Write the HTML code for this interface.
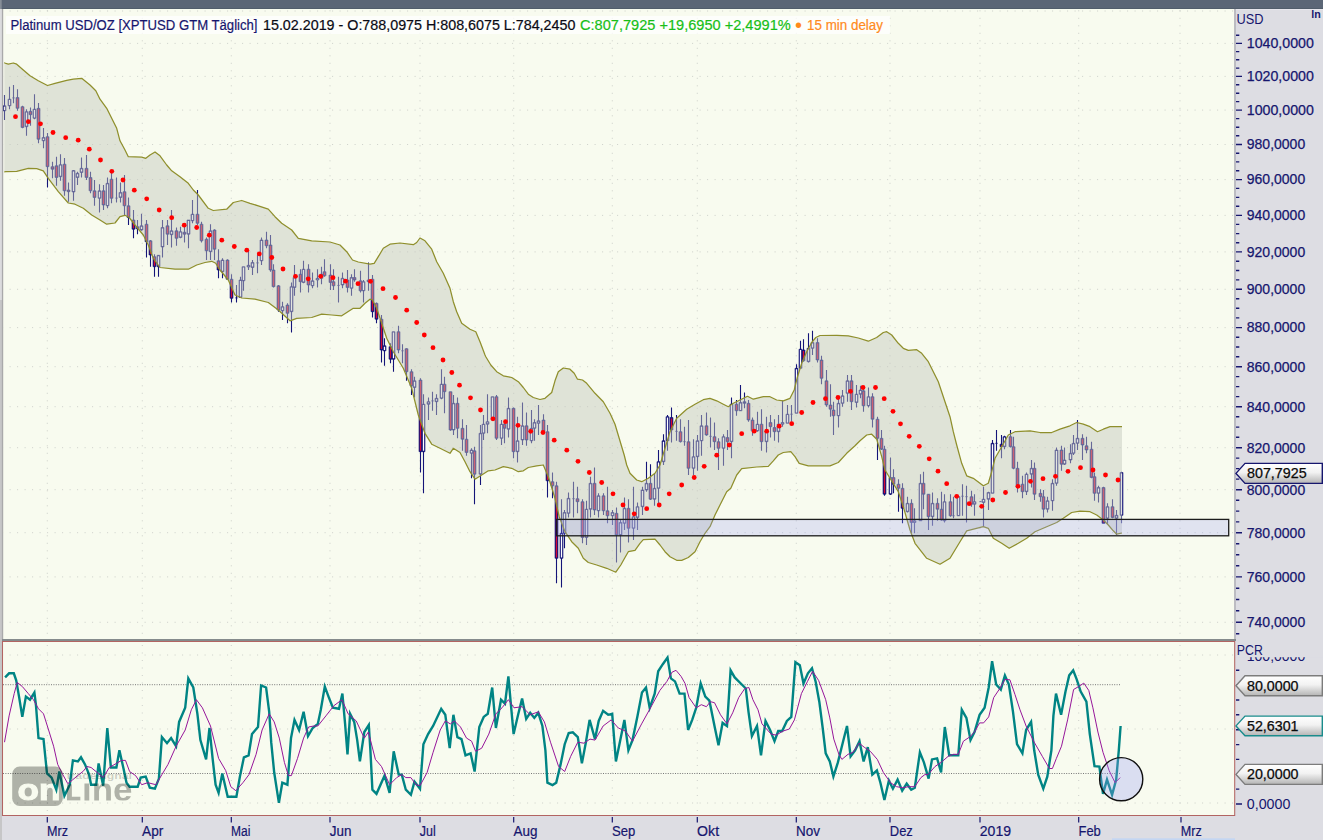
<!DOCTYPE html><html><head><meta charset="utf-8"><title>Platinum USD/OZ</title>
<style>html,body{margin:0;padding:0;background:#dddde3}svg{display:block}text{font-family:"Liberation Sans",sans-serif}</style></head><body>
<svg width="1323" height="840" viewBox="0 0 1323 840">
<defs><linearGradient id="tg" x1="0" y1="0" x2="0" y2="1"><stop offset="0" stop-color="#ffffff"/><stop offset="0.45" stop-color="#f2f2f2"/><stop offset="1" stop-color="#b4b4b4"/></linearGradient>
<clipPath id="cm"><rect x="3" y="9" width="1232" height="630"/></clipPath><clipPath id="cb"><rect x="3" y="642" width="1232" height="173"/></clipPath></defs>
<rect width="1323" height="840" fill="#dddde3"/>
<rect x="3" y="9" width="1232" height="631" fill="#f8fbef"/>
<rect x="3" y="642" width="1232" height="173.5" fill="#f8fbef"/>
<path d="M2.1 622.3 H1234 M2.1 576.9 H1234 M2.1 532.7 H1234 M2.1 489.7 H1234 M2.1 447.7 H1234 M2.1 406.7 H1234 M2.1 366.7 H1234 M2.1 327.6 H1234 M2.1 289.3 H1234 M2.1 251.9 H1234 M2.1 215.4 H1234 M2.1 179.6 H1234 M2.1 144.5 H1234 M2.1 110.1 H1234 M2.1 76.4 H1234 M2.1 43.4 H1234 M2.1 11 H1234 M47.3 10.3 V639 M142.3 10.3 V639 M231.3 10.3 V639 M330 10.3 V639 M420 10.3 V639 M513.7 10.3 V639 M612.3 10.3 V639 M697.3 10.3 V639 M796.3 10.3 V639 M890 10.3 V639 M980 10.3 V639 M1078.7 10.3 V639 M1180 10.3 V639" stroke="#bfc1bd" stroke-width="1" stroke-dasharray="1 6.5" fill="none" opacity="0.75"/>
<path d="M2.1 803 H1234 M2.1 729 H1234 M2.1 655 H1234 M47.3 645 V815 M142.3 645 V815 M231.3 645 V815 M330 645 V815 M420 645 V815 M513.7 645 V815 M612.3 645 V815 M697.3 645 V815 M796.3 645 V815 M890 645 V815 M980 645 V815 M1078.7 645 V815 M1180 645 V815" stroke="#bfc1bd" stroke-width="1" stroke-dasharray="1 6.5" fill="none" opacity="0.75"/>
<g clip-path="url(#cm)">
<path d="M4.5 95 V120 M9.5 86.7 V109.2 M13.5 85 V103.3 M17.5 89.2 V110.8 M22.5 105.8 V128.3 M26.5 109.2 V135.8 M30.5 107.5 V125.8 M34.5 94.2 V119.2 M38.5 103 V143.3 M43.5 128 V148.3 M47.5 133 V187.5 M52.5 161.7 V178.3 M56.5 156.7 V185.8 M60.5 154.2 V180.8 M64.5 158 V195.8 M68.5 182.5 V201.7 M73.5 170 V200.8 M77.5 171.7 V185 M81.5 157.5 V177.5 M86.5 155 V180 M90.5 171.7 V193.3 M94.5 180 V205.8 M99.5 184.2 V212.5 M103.5 185 V210 M107.5 177.5 V208.3 M111.5 171.7 V203.3 M116.5 177.5 V202.5 M120.5 182.5 V202.5 M124.5 175 V215 M128.5 197.5 V225 M133.5 210 V238.3 M137.5 220 V234.2 M141.5 213.7 V230.8 M146.5 220 V257.5 M150.5 240 V266.7 M154.5 254.2 V276.7 M158.5 255 V276.7 M162.5 220 V257.5 M167.5 220 V245 M171.5 210 V247.5 M176.5 227.5 V245.8 M180.5 226.7 V238.3 M184.5 226.7 V242.5 M188.5 220 V248.3 M192.5 200 V223.3 M197.5 190 V225 M201.5 221.7 V242.5 M206.5 237.5 V260 M210.5 224.2 V260 M214.5 229.2 V260 M218.5 249.2 V278.3 M222.5 258.3 V278.3 M227.5 259.2 V279.2 M231.5 274.2 V302.5 M236.5 285 V302.5 M240.5 276.7 V297.5 M243.5 266.7 V290.8 M248.5 250 V270 M252.5 260 V275 M257.5 255 V273.3 M261.5 237.5 V265 M266.5 231.7 V248.3 M270.5 235 V271.7 M273.5 264.2 V287.5 M278.5 285 V311.7 M282.5 301.7 V320 M287.5 303.3 V323.3 M291.5 282.5 V332.5 M294.5 265 V295.8 M300.5 269.2 V292.5 M303.5 260.8 V283.3 M308.5 264.2 V292.5 M312.5 272.5 V288.3 M317.5 269.2 V287.5 M321.5 266.7 V284.2 M324.5 259.2 V276.7 M330.5 264.2 V290 M333.5 269.2 V290 M338.5 276.7 V302.5 M342.5 272.5 V288.3 M347.5 270 V292.5 M351.5 274.2 V295.8 M354.5 269.2 V281.7 M360.5 270.8 V292.5 M363.5 280 V302.5 M368.5 262.5 V290.8 M372.5 275 V317.5 M376.5 302.5 V323.3 M381.5 315 V362.5 M384.5 338.3 V365.8 M390.5 343.3 V363.3 M393.5 331.7 V371.7 M398.5 325.8 V353.3 M402.5 344.2 V363.3 M406.5 348.3 V380.8 M411.5 369.2 V395 M414.5 376.7 V397.5 M420.5 378.3 V472.5 M423.5 394.2 V493.3 M428.5 397.5 V420 M432.5 391.7 V410.8 M436.5 394.2 V415 M441.5 369.2 V399.2 M444.5 376.7 V413.3 M450.5 391.7 V430.8 M453.5 395 V435 M457.5 397.5 V438.3 M462.5 419.2 V450.8 M466.5 425 V455.8 M471.5 448.3 V478.3 M474.5 446.7 V504.2 M480.5 425 V485 M483.5 415 V440 M487.5 394.2 V433.3 M492.5 396.7 V420.8 M496.5 395 V440 M501.5 420 V445 M504.5 420.8 V443.3 M508.5 397.5 V437.5 M513.5 407.5 V458.3 M517.5 416.7 V462.5 M522.5 402.5 V445 M526.5 412.5 V445.8 M531.5 410 V443.3 M534.5 419.2 V440.8 M538.5 405 V435 M543.5 414.2 V433.3 M547.5 425 V497.5 M552.5 472.5 V498.3 M556.5 481.7 V583.3 M561.5 499.2 V587.5 M564.5 510 V548.3 M568.5 492.5 V517.5 M573.5 481.7 V517.5 M577.5 486.7 V513.3 M582.5 499.2 V543.3 M586.5 500.8 V545 M590.5 476.7 V517.5 M594.5 467.5 V515 M598.5 493.3 V517.5 M603.5 493.3 V515 M607.5 486.7 V523.3 M612.5 510 V525 M616.5 507.5 V562.5 M620.5 519.2 V552.5 M624.5 497.5 V530 M628.5 499.2 V542.5 M633.5 486.7 V540 M637.5 502.5 V530 M642.5 486.7 V515 M646.5 461.7 V491.7 M650.5 464.2 V500 M654.5 473.3 V505.8 M658.5 450 V503.3 M663.5 434.2 V465 M667.5 415 V450.8 M671.5 407.5 V442.5 M676.5 415 V440.8 M680.5 419.2 V442.5 M684.5 426.7 V445.8 M688.5 420 V475 M693.5 439.2 V475 M697.5 435 V470.8 M701.5 415 V455.8 M706.5 412.5 V435.8 M710.5 417.5 V447.5 M714.5 422.5 V450 M718.5 438.3 V470 M723.5 434.2 V465.8 M727.5 430 V450 M731.5 397.5 V458.3 M736.5 400 V415.8 M740.5 385 V410.8 M744.5 392.5 V408.3 M748.5 400 V421.7 M752.5 417.5 V435.8 M757.5 411.7 V431.7 M761.5 409.2 V450.8 M766.5 416.7 V452.5 M770.5 415 V437.5 M774.5 419.2 V440.8 M778.5 415 V442.5 M782.5 400.8 V426.7 M787.5 405 V423.3 M791.5 405 V421.7 M796.5 364.2 V413.3 M800.5 340.8 V368.3 M803.5 339.2 V361.7 M808.5 333.3 V362.5 M812.5 330.8 V355 M817.5 338.3 V362.5 M821.5 355.8 V384.2 M826.5 370 V406.7 M830.5 384.2 V416.7 M833.5 401.7 V435 M838.5 397.5 V427.5 M842.5 390 V406.7 M847.5 375 V401.7 M851.5 375 V410 M856.5 385 V407.5 M860.5 385.8 V398.3 M863.5 386.7 V411.7 M868.5 387.5 V407.5 M872.5 393.3 V427.5 M877.5 416.7 V460 M881.5 430 V450 M884.5 445.8 V495.8 M890.5 457.5 V495 M893.5 469.2 V493.3 M898.5 479.2 V511.7 M902.5 483.3 V523.3 M907.5 496.7 V512.5 M911.5 499.2 V533.3 M914.5 508.3 V533.3 M920.5 474.2 V520.8 M923.5 471.7 V509.2 M928.5 494.2 V530 M932.5 492.5 V525.8 M937.5 498.3 V520.8 M941.5 491.7 V520.8 M944.5 494.2 V522.5 M950.5 494.2 V516.7 M953.5 496.7 V518.3 M958.5 495.8 V515.8 M962.5 484.2 V515.8 M966.5 485.8 V522.5 M971.5 490.8 V506.7 M974.5 494.2 V515.8 M980.5 501.3 V502 M983.5 486.7 V526.7 M988.5 491.7 V510 M992.5 440 V493.3 M996.5 430 V450.8 M1001.5 435 V458.3 M1004.5 435.8 V449.2 M1010.5 430 V447.5 M1013.5 436.7 V469.2 M1017.5 461.7 V492.5 M1022.5 475.8 V498.3 M1026.5 472.5 V495 M1031.5 460 V487.5 M1034.5 462.5 V500 M1040.5 489.2 V501.7 M1043.5 490 V517.5 M1047.5 496.7 V512.5 M1052.5 479.2 V510.8 M1056.5 447.5 V485.8 M1061.5 445.8 V470.8 M1064.5 447.5 V465 M1070.5 444.2 V463.3 M1073.5 435 V455 M1077.5 420 V450 M1082.5 434.2 V460 M1086.5 436.7 V453.3 M1091.5 441.7 V478.3 M1094.5 472.5 V500.8 M1098.5 485.8 V502.5 M1103.5 486.7 V523.3 M1107.5 503.3 V524.2 M1112.5 499.2 V518.3 M1116.5 510 V535 M1121.5 471.7 V523.3" stroke="#141478" stroke-width="1.1" fill="none"/>
<path d="M3 105.8 h3 V110.8 h-3 Z M8 99.2 h3 V105.8 h-3 Z M12 97.9 h3 M16 97.5 h3 V108.3 h-3 Z M21 106.7 h3 V127.5 h-3 Z M25 111.7 h3 V126.7 h-3 Z M29 111.3 h3 V114.7 h-3 Z M33 109.2 h3 V118.3 h-3 Z M37 108.3 h3 V139.2 h-3 Z M42 137.5 h3 V140.8 h-3 Z M46 136.7 h3 V166.7 h-3 Z M51 166.7 h3 V169.2 h-3 Z M55 165.8 h3 V177.5 h-3 Z M59 164.7 h3 V176.7 h-3 Z M63 164.2 h3 V190.8 h-3 Z M67 190 h3 V191.7 h-3 Z M72 170.5 h3 V192 h-3 Z M76 173.3 h3 V177.5 h-3 Z M80 168.3 h3 V172.5 h-3 Z M85 168.3 h3 V177.5 h-3 Z M89 177.5 h3 V190.8 h-3 Z M93 190.8 h3 V197.5 h-3 Z M98 190.8 h3 V198.3 h-3 Z M102 190.8 h3 V205 h-3 Z M106 183.3 h3 V205.8 h-3 Z M110 179.2 h3 V198.3 h-3 Z M115 198.1 h3 M119 192.5 h3 V197.5 h-3 Z M123 191.7 h3 V205.8 h-3 Z M127 205.8 h3 V217.5 h-3 Z M132 220 h3 V229.2 h-3 Z M136 226.7 h3 V228.7 h-3 Z M140 225.8 h3 V230 h-3 Z M145 224.2 h3 V241.7 h-3 Z M149 240.8 h3 V255 h-3 Z M153 256.7 h3 V266.7 h-3 Z M157 255.3 h3 V266.7 h-3 Z M161 227.5 h3 V247 h-3 Z M166 225.8 h3 V234.2 h-3 Z M170 230.8 h3 V234.7 h-3 Z M175 230.8 h3 V238.3 h-3 Z M179 231.7 h3 V237.5 h-3 Z M183 232.2 h3 V234.2 h-3 Z M187 220 h3 V234.2 h-3 Z M191 214.2 h3 V220.8 h-3 Z M196 214.2 h3 V223.3 h-3 Z M200 224.2 h3 V240.8 h-3 Z M205 239.2 h3 V250.8 h-3 Z M209 230.8 h3 V251.7 h-3 Z M213 230 h3 V249.2 h-3 Z M217 260.8 h3 V270 h-3 Z M221 260 h3 V271.7 h-3 Z M226 260 h3 V279.2 h-3 Z M230 279.2 h3 V298.3 h-3 Z M235 297.9 h3 M239 280 h3 V297.5 h-3 Z M242 266.7 h3 V280.8 h-3 Z M247 265.3 h3 V267 h-3 Z M251 262.5 h3 V267.5 h-3 Z M256 262.9 h3 M260 240 h3 V260.8 h-3 Z M265 240 h3 V245.8 h-3 Z M269 245 h3 V270 h-3 Z M272 270 h3 V286.7 h-3 Z M277 285.8 h3 V310 h-3 Z M281 306.7 h3 V310.8 h-3 Z M286 305 h3 V313.3 h-3 Z M290 286.7 h3 V311.7 h-3 Z M293 277.5 h3 V287.5 h-3 Z M299 274.2 h3 V281.7 h-3 Z M302 269.2 h3 V282.5 h-3 Z M307 269.2 h3 V285 h-3 Z M311 280.8 h3 V285.8 h-3 Z M316 278.3 h3 V280 h-3 Z M320 274.2 h3 V278.3 h-3 Z M323 271.7 h3 V275.8 h-3 Z M329 275 h3 V282.5 h-3 Z M332 281.7 h3 V285.8 h-3 Z M337 285.4 h3 M341 278.3 h3 V285 h-3 Z M346 280 h3 V287.5 h-3 Z M350 277.5 h3 V288.3 h-3 Z M353 277.5 h3 V280 h-3 Z M359 280.8 h3 V290.8 h-3 Z M362 281.7 h3 V290.8 h-3 Z M367 280 h3 V281.7 h-3 Z M371 279.2 h3 V311.7 h-3 Z M375 303.3 h3 V319.2 h-3 Z M380 319.2 h3 V350 h-3 Z M383 345.8 h3 V350.8 h-3 Z M389 346.7 h3 V359.2 h-3 Z M392 331.7 h3 V359.2 h-3 Z M397 331.7 h3 V350 h-3 Z M401 350.8 h3 M405 348.7 h3 V371.7 h-3 Z M410 371.7 h3 V385.8 h-3 Z M413 380.8 h3 V387.5 h-3 Z M419 380 h3 V451.7 h-3 Z M422 404.2 h3 V451.7 h-3 Z M427 401.7 h3 V404.2 h-3 Z M431 400.9 h3 M435 398.3 h3 V401.7 h-3 Z M440 384.2 h3 V398.3 h-3 Z M443 384.2 h3 V391.7 h-3 Z M449 391.7 h3 V430 h-3 Z M452 403.3 h3 V430 h-3 Z M456 403.3 h3 V428.3 h-3 Z M461 428.3 h3 V439.2 h-3 Z M465 439.2 h3 V452.5 h-3 Z M470 450 h3 V453.3 h-3 Z M473 450.8 h3 V474.2 h-3 Z M479 433.3 h3 V474.2 h-3 Z M482 424.2 h3 V433.3 h-3 Z M486 421.7 h3 V424.2 h-3 Z M491 396.7 h3 V420 h-3 Z M495 396.7 h3 V438.3 h-3 Z M500 424.2 h3 V438.3 h-3 Z M503 424.2 h3 V428.3 h-3 Z M507 408.3 h3 V429.2 h-3 Z M512 408.3 h3 V451.7 h-3 Z M516 440.8 h3 V451.7 h-3 Z M521 425.8 h3 V440 h-3 Z M525 425.8 h3 V440 h-3 Z M530 428.3 h3 V440.8 h-3 Z M533 422.5 h3 V428.3 h-3 Z M537 420.8 h3 V423.3 h-3 Z M542 420 h3 V431.7 h-3 Z M546 431.7 h3 V480.8 h-3 Z M551 481.7 h3 V485.8 h-3 Z M555 485.8 h3 V558.3 h-3 Z M560 533.3 h3 V558.3 h-3 Z M563 512.5 h3 V533.3 h-3 Z M567 498.3 h3 V513.3 h-3 Z M572 498.7 h3 M576 498.7 h3 V501.7 h-3 Z M581 501.7 h3 V537.5 h-3 Z M585 509.2 h3 V537.5 h-3 Z M589 483.3 h3 V509.2 h-3 Z M593 483.3 h3 V510 h-3 Z M597 495.8 h3 V510.8 h-3 Z M602 495.8 h3 V510.8 h-3 Z M606 510.8 h3 V515.8 h-3 Z M611 512.5 h3 V515.8 h-3 Z M615 513.3 h3 V535 h-3 Z M619 522.5 h3 V535 h-3 Z M623 508.3 h3 V523.3 h-3 Z M627 508.3 h3 V528.3 h-3 Z M632 516.7 h3 V528.3 h-3 Z M636 506.7 h3 V517.5 h-3 Z M641 490 h3 V506.7 h-3 Z M645 483.3 h3 V490 h-3 Z M649 483.3 h3 V499.2 h-3 Z M653 488.3 h3 V499.2 h-3 Z M657 461.7 h3 V488.3 h-3 Z M662 440.8 h3 V461.7 h-3 Z M666 416.7 h3 V440.8 h-3 Z M670 417.5 h3 V430 h-3 Z M675 431.3 h3 M679 431.7 h3 V441.7 h-3 Z M683 441.7 h3 M687 441.7 h3 V468.3 h-3 Z M692 456.7 h3 V468.3 h-3 Z M696 440.8 h3 V456.7 h-3 Z M700 425.8 h3 V440.8 h-3 Z M705 425.8 h3 V435 h-3 Z M709 436.3 h3 M713 436.7 h3 V441.7 h-3 Z M717 441.7 h3 V448.3 h-3 Z M722 436.7 h3 V448.3 h-3 Z M726 437.5 h3 V441.7 h-3 Z M730 404.2 h3 V441.7 h-3 Z M735 404.2 h3 V410.8 h-3 Z M739 402.5 h3 V410.8 h-3 Z M743 401.7 h3 V403.3 h-3 Z M747 403.3 h3 V420 h-3 Z M751 420 h3 V430.8 h-3 Z M756 424.2 h3 V430.8 h-3 Z M760 424.2 h3 V441.7 h-3 Z M765 430.8 h3 V441.7 h-3 Z M769 422.5 h3 V426.7 h-3 Z M773 427.5 h3 V431.7 h-3 Z M777 424.2 h3 V431.7 h-3 Z M781 422.5 h3 V424.2 h-3 Z M786 414.2 h3 V423.3 h-3 Z M790 414.2 h3 M795 368.3 h3 V413.3 h-3 Z M799 349.2 h3 V368.3 h-3 Z M802 350 h3 V360.8 h-3 Z M807 348.3 h3 V361.7 h-3 Z M811 342.5 h3 V348.3 h-3 Z M816 342.5 h3 V360 h-3 Z M820 360 h3 V378.3 h-3 Z M825 380.8 h3 V405 h-3 Z M829 405 h3 V409.2 h-3 Z M832 410 h3 V415.8 h-3 Z M837 403.3 h3 V415.8 h-3 Z M841 395.8 h3 V403.3 h-3 Z M846 380.8 h3 V393.3 h-3 Z M850 380.8 h3 V401.7 h-3 Z M855 394.2 h3 V402.5 h-3 Z M859 390 h3 V394.2 h-3 Z M862 390.8 h3 V405.8 h-3 Z M867 396.7 h3 V405.8 h-3 Z M871 396.7 h3 V419.2 h-3 Z M876 419.2 h3 V438.3 h-3 Z M880 438.3 h3 V449.2 h-3 Z M883 449.2 h3 V494.2 h-3 Z M889 477.5 h3 V494.2 h-3 Z M892 477.5 h3 V484.2 h-3 Z M897 484.2 h3 V488.3 h-3 Z M901 488.3 h3 V508.3 h-3 Z M906 503.3 h3 V511.7 h-3 Z M910 503.3 h3 V522.5 h-3 Z M913 520.8 h3 V522.5 h-3 Z M919 483.3 h3 V520.8 h-3 Z M922 483.3 h3 V494.2 h-3 Z M927 494.2 h3 V516.7 h-3 Z M931 503.3 h3 V516.7 h-3 Z M936 503.3 h3 V509.2 h-3 Z M940 509.2 h3 V520 h-3 Z M943 501.7 h3 V520.8 h-3 Z M949 501.7 h3 V515.8 h-3 Z M952 515.8 h3 M957 496.7 h3 V515.8 h-3 Z M961 496.2 h3 M965 496.7 h3 M970 496.7 h3 V504.2 h-3 Z M973 501.7 h3 V504.2 h-3 Z M979 501.7 h3 M982 499.2 h3 V502.5 h-3 Z M987 492.5 h3 V499.2 h-3 Z M991 443.3 h3 V493.3 h-3 Z M995 443.3 h3 M1000 444.2 h3 V446.7 h-3 Z M1003 436.7 h3 V446.7 h-3 Z M1009 436.7 h3 V446.7 h-3 Z M1012 446.7 h3 V468.3 h-3 Z M1016 468.3 h3 V487.5 h-3 Z M1021 484.2 h3 V491.7 h-3 Z M1025 474.2 h3 V491.7 h-3 Z M1030 468.3 h3 V474.2 h-3 Z M1033 468.3 h3 V494.2 h-3 Z M1039 493.3 h3 V496.7 h-3 Z M1042 496.7 h3 V509.2 h-3 Z M1046 500.8 h3 V509.2 h-3 Z M1051 483.3 h3 V500.8 h-3 Z M1055 450 h3 V483.3 h-3 Z M1060 450 h3 V464.2 h-3 Z M1063 460 h3 V464.2 h-3 Z M1069 453.3 h3 V460 h-3 Z M1072 443.3 h3 V453.3 h-3 Z M1076 438.3 h3 V443.3 h-3 Z M1081 438.3 h3 V445 h-3 Z M1085 445.8 h3 V450 h-3 Z M1090 449.2 h3 V477.5 h-3 Z M1093 476.7 h3 V493.3 h-3 Z M1097 487.5 h3 V493.3 h-3 Z M1102 487.5 h3 V523.3 h-3 Z M1106 506.7 h3 V518.3 h-3 Z M1111 506.7 h3 V517.5 h-3 Z M1115 515.3 h3 V518.3 h-3 Z M1120 472.5 h3 V515.3 h-3 Z" fill="#141478" stroke="#141478" stroke-width="0.6"/>
<path d="M17.5 98.4 V107.4 M22.5 107.6 V126.6 M30.5 112.2 V113.8 M38.5 109.2 V138.3 M47.5 137.6 V165.8 M52.5 167.6 V168.3 M56.5 166.7 V176.6 M64.5 165.1 V189.9 M68.5 190.9 V190.8 M86.5 169.2 V176.6 M90.5 178.4 V189.9 M94.5 191.7 V196.6 M103.5 191.7 V204.1 M111.5 180.1 V197.4 M124.5 192.6 V204.9 M128.5 206.7 V216.6 M133.5 220.9 V228.3 M137.5 227.6 V227.8 M146.5 225.1 V240.8 M150.5 241.7 V254.1 M154.5 257.6 V265.8 M167.5 226.7 V233.3 M176.5 231.7 V237.4 M184.5 233.1 V233.3 M197.5 215.1 V222.4 M201.5 225.1 V239.9 M206.5 240.1 V249.9 M214.5 230.9 V248.3 M218.5 261.7 V269.1 M227.5 260.9 V278.3 M231.5 280.1 V297.4 M266.5 240.9 V244.9 M270.5 245.9 V269.1 M273.5 270.9 V285.8 M278.5 286.7 V309.1 M287.5 305.9 V312.4 M300.5 275.1 V280.8 M308.5 270.1 V284.1 M324.5 272.6 V274.9 M330.5 275.9 V281.6 M333.5 282.6 V284.9 M347.5 280.9 V286.6 M354.5 278.4 V279.1 M360.5 281.7 V289.9 M372.5 280.1 V310.8 M376.5 304.2 V318.3 M381.5 320.1 V349.1 M390.5 347.6 V358.3 M398.5 332.6 V349.1 M406.5 349.6 V370.8 M411.5 372.6 V384.9 M420.5 380.9 V450.8 M444.5 385.1 V390.8 M450.5 392.6 V429.1 M457.5 404.2 V427.4 M462.5 429.2 V438.3 M466.5 440.1 V451.6 M474.5 451.7 V473.3 M496.5 397.6 V437.4 M504.5 425.1 V427.4 M513.5 409.2 V450.8 M526.5 426.7 V439.1 M543.5 420.9 V430.8 M547.5 432.6 V479.9 M552.5 482.6 V484.9 M556.5 486.7 V557.4 M577.5 499.6 V500.8 M582.5 502.6 V536.6 M594.5 484.2 V509.1 M603.5 496.7 V509.9 M607.5 511.7 V514.9 M616.5 514.2 V534.1 M628.5 509.2 V527.4 M650.5 484.2 V498.3 M671.5 418.4 V429.1 M680.5 432.6 V440.8 M688.5 442.6 V467.4 M706.5 426.7 V434.1 M714.5 437.6 V440.8 M718.5 442.6 V447.4 M727.5 438.4 V440.8 M736.5 405.1 V409.9 M748.5 404.2 V419.1 M752.5 420.9 V429.9 M761.5 425.1 V440.8 M770.5 423.4 V425.8 M774.5 428.4 V430.8 M803.5 350.9 V359.9 M817.5 343.4 V359.1 M821.5 360.9 V377.4 M826.5 381.7 V404.1 M830.5 405.9 V408.3 M833.5 410.9 V414.9 M851.5 381.7 V400.8 M863.5 391.7 V404.9 M872.5 397.6 V418.3 M877.5 420.1 V437.4 M881.5 439.2 V448.3 M884.5 450.1 V493.3 M893.5 478.4 V483.3 M898.5 485.1 V487.4 M902.5 489.2 V507.4 M911.5 504.2 V521.6 M923.5 484.2 V493.3 M928.5 495.1 V515.8 M937.5 504.2 V508.3 M941.5 510.1 V519.1 M950.5 502.6 V514.9 M971.5 497.6 V503.3 M1001.5 445.1 V445.8 M1010.5 437.6 V445.8 M1013.5 447.6 V467.4 M1017.5 469.2 V486.6 M1022.5 485.1 V490.8 M1034.5 469.2 V493.3 M1040.5 494.2 V495.8 M1043.5 497.6 V508.3 M1061.5 450.9 V463.3 M1082.5 439.2 V444.1 M1086.5 446.7 V449.1 M1091.5 450.1 V476.6 M1094.5 477.6 V492.4 M1103.5 488.4 V522.4 M1112.5 507.6 V516.6" stroke="#d40a34" stroke-width="1.3" fill="none"/>
<path d="M4.5 106.7 V109.9 M9.5 100.1 V104.9 M26.5 112.6 V125.8 M34.5 110.1 V117.4 M43.5 138.4 V139.9 M60.5 165.6 V175.8 M73.5 171.4 V191.1 M77.5 174.2 V176.6 M81.5 169.2 V171.6 M99.5 191.7 V197.4 M107.5 184.2 V204.9 M120.5 193.4 V196.6 M141.5 226.7 V229.1 M158.5 256.2 V265.8 M162.5 228.4 V246.1 M171.5 231.7 V233.8 M180.5 232.6 V236.6 M188.5 220.9 V233.3 M192.5 215.1 V219.9 M210.5 231.7 V250.8 M222.5 260.9 V270.8 M240.5 280.9 V296.6 M243.5 267.6 V279.9 M248.5 266.2 V266.1 M252.5 263.4 V266.6 M261.5 240.9 V259.9 M282.5 307.6 V309.9 M291.5 287.6 V310.8 M294.5 278.4 V286.6 M303.5 270.1 V281.6 M312.5 281.7 V284.9 M317.5 279.2 V279.1 M321.5 275.1 V277.4 M342.5 279.2 V284.1 M351.5 278.4 V287.4 M363.5 282.6 V289.9 M368.5 280.9 V280.8 M384.5 346.7 V349.9 M393.5 332.6 V358.3 M414.5 381.7 V386.6 M423.5 405.1 V450.8 M428.5 402.6 V403.3 M436.5 399.2 V400.8 M441.5 385.1 V397.4 M453.5 404.2 V429.1 M471.5 450.9 V452.4 M480.5 434.2 V473.3 M483.5 425.1 V432.4 M487.5 422.6 V423.3 M492.5 397.6 V419.1 M501.5 425.1 V437.4 M508.5 409.2 V428.3 M517.5 441.7 V450.8 M522.5 426.7 V439.1 M531.5 429.2 V439.9 M534.5 423.4 V427.4 M538.5 421.7 V422.4 M561.5 534.2 V557.4 M564.5 513.4 V532.4 M568.5 499.2 V512.4 M586.5 510.1 V536.6 M590.5 484.2 V508.3 M598.5 496.7 V509.9 M612.5 513.4 V514.9 M620.5 523.4 V534.1 M624.5 509.2 V522.4 M633.5 517.6 V527.4 M637.5 507.6 V516.6 M642.5 490.9 V505.8 M646.5 484.2 V489.1 M654.5 489.2 V498.3 M658.5 462.6 V487.4 M663.5 441.7 V460.8 M667.5 417.6 V439.9 M693.5 457.6 V467.4 M697.5 441.7 V455.8 M701.5 426.7 V439.9 M723.5 437.6 V447.4 M731.5 405.1 V440.8 M740.5 403.4 V409.9 M744.5 402.6 V402.4 M757.5 425.1 V429.9 M766.5 431.7 V440.8 M778.5 425.1 V430.8 M782.5 423.4 V423.3 M787.5 415.1 V422.4 M796.5 369.2 V412.4 M800.5 350.1 V367.4 M808.5 349.2 V360.8 M812.5 343.4 V347.4 M838.5 404.2 V414.9 M842.5 396.7 V402.4 M847.5 381.7 V392.4 M856.5 395.1 V401.6 M860.5 390.9 V393.3 M868.5 397.6 V404.9 M890.5 478.4 V493.3 M907.5 504.2 V510.8 M914.5 521.7 V521.6 M920.5 484.2 V519.9 M932.5 504.2 V515.8 M944.5 502.6 V519.9 M958.5 497.6 V514.9 M974.5 502.6 V503.3 M983.5 500.1 V501.6 M988.5 493.4 V498.3 M992.5 444.2 V492.4 M1004.5 437.6 V445.8 M1026.5 475.1 V490.8 M1031.5 469.2 V473.3 M1047.5 501.7 V508.3 M1052.5 484.2 V499.9 M1056.5 450.9 V482.4 M1064.5 460.9 V463.3 M1070.5 454.2 V459.1 M1073.5 444.2 V452.4 M1077.5 439.2 V442.4 M1098.5 488.4 V492.4 M1107.5 507.6 V517.4 M1116.5 516.2 V517.4 M1121.5 473.4 V514.4" stroke="#ffffff" stroke-width="1.3" fill="none"/>
<path d="M4.3 63.2 L4.5 63 L8.3 64.2 L13.3 63 L16.7 64.2 L23.3 70 L30 75.8 L38.3 80.8 L47.5 85.5 L55 83.3 L66.7 80.3 L73.3 79.2 L81.7 78.3 L90 85 L95.8 90.8 L100 99.2 L106.7 108.3 L111.7 118.3 L116.7 128.3 L120 140.8 L125 150 L128.3 156.7 L141.7 157.2 L145.8 158.3 L150 155 L155 152 L160 155.8 L166.7 165 L171.7 170.8 L180 176.7 L188.3 183.3 L193.3 190 L198.3 195 L208.3 208.3 L213.3 210.5 L226.7 209.2 L233.3 202.5 L241.7 200.5 L250 203.3 L258.3 205.8 L268.3 209.2 L275 216.7 L281.7 223.3 L291.7 230 L298.3 238.3 L311.7 240.8 L330 242 L340 245 L346.7 251.7 L352.5 260 L358.3 262 L370 264.2 L374.2 263.3 L378.3 256.7 L383.3 248.3 L390 244.2 L400 243 L413.3 244.7 L416.7 242.5 L420 238 L425 240.8 L431.7 249.2 L436.7 261.7 L443.3 273.3 L450 288.3 L453.3 301.7 L456.7 311.7 L461.7 323.3 L470 329.2 L475.8 331.7 L480 341.7 L485 355 L485.8 356.7 L490.8 365 L496.7 371.7 L503.3 375.8 L511.7 377.5 L518.3 381.7 L523.3 387.5 L528.3 394.2 L533.3 397.5 L540 399.5 L545 398.3 L551.7 392.5 L555 380.8 L558.3 371.7 L563.3 368 L570 369.2 L574.2 373.3 L577.5 379.2 L582.5 380 L586.7 383.3 L595 393.3 L603.3 401.7 L610 413.3 L615 424.2 L624.2 455 L626.7 465 L630 473.3 L636.7 480 L641.7 481.7 L648.3 478.3 L655 473.3 L660 465 L665 448.3 L670 431.7 L676.7 418.3 L686.7 409.2 L695 404.2 L703.3 399.7 L710 398.3 L716.7 400.8 L723.3 404.2 L728.3 406.7 L733.3 403.3 L740 400 L747.5 396.3 L753.3 399.2 L763.3 396.7 L770 396.7 L776.7 400 L783.3 400.8 L790 398.3 L794.2 390 L797.5 376.7 L801.7 363.3 L806.7 351.7 L811.7 342.5 L815.8 337.5 L820 335.5 L836.7 335.3 L848.3 335.8 L858.3 338 L868.3 341.2 L876.7 337.5 L883.3 332.5 L886.7 331.7 L891.7 335 L898.3 343.3 L903.3 348.3 L908.3 350.3 L916.7 349.7 L921.7 353.3 L928.3 361.7 L933.3 371.7 L938.3 381.7 L943.3 396.7 L950 416.7 L953.3 431.7 L956.7 445 L961.7 463.3 L966.7 475.8 L973.3 478.3 L983.3 485.8 L988.3 483.3 L991.7 471.7 L995 458.3 L1001.7 446.7 L1008.3 435 L1015 431.7 L1030 430.8 L1040 432.5 L1051.7 432.5 L1060 429.2 L1070 425.8 L1076.7 422.5 L1083.3 424.2 L1090 426.7 L1097.5 431.7 L1103.3 429.2 L1110 426.7 L1122 426.7 L1122 533 L1116.7 534.2 L1113.3 530.8 L1108.3 525 L1103.3 520 L1096.7 515 L1090 511.7 L1080 511.2 L1071.7 512.5 L1063.3 518.3 L1056.7 522.5 L1046.7 526.7 L1035 531.7 L1026.7 538.3 L1018.3 543.3 L1009.2 548.3 L1001.7 543.3 L993.3 538.3 L988.3 528.3 L983.3 526.7 L966.7 530.8 L960 541.7 L950 558.3 L940 564.2 L926.7 558.3 L915 543.3 L910 530 L903.3 506.7 L898.3 491.7 L890 478.3 L885 470 L881.7 456.7 L876.7 439.2 L871.7 434.2 L866.7 435 L860 440.8 L855 445.8 L846.7 453.3 L838.3 462.5 L830 465.8 L818.3 465.8 L808.3 465.8 L799.2 463.3 L795 456.7 L790.8 451.7 L783.3 452.5 L778.3 455 L773.3 460.8 L768.3 466.3 L756.7 467 L741.7 468.7 L736.7 475 L730.8 488.3 L726.7 491.7 L720 505 L715 515 L710 526.7 L705 533.3 L700 541.7 L695 551.7 L688.3 557.5 L681.7 560.3 L676.7 560.3 L670 556.7 L665 551.7 L660 545 L655 539.2 L643.3 539.7 L640 543.3 L635 550.3 L628.3 551.7 L625 557.5 L620.8 565 L615.8 572.2 L606.7 568.3 L596.7 565 L588.3 562.5 L583.3 558.3 L578.3 548.3 L571.7 541.7 L565 531.7 L559.2 516.7 L555 498.3 L548.3 476.7 L543.3 465 L536.7 465.8 L528.3 467.5 L523.3 470.8 L518.3 471.7 L511.7 468.3 L503.3 466.7 L495 470 L488.3 470.8 L481.7 475 L475 479.2 L470 471.7 L465 461.7 L460 452.5 L453.3 448.3 L450 453.3 L440 448.3 L431.7 444.2 L425 433.3 L418.3 415 L411.7 388.3 L403.3 368.3 L393.3 351.7 L386.7 338.3 L381.7 323.3 L376.7 308.3 L372.5 300 L370 299.2 L365 303.3 L360 308.3 L353.3 308.3 L341.7 315.8 L331.7 315 L321.7 314.2 L311.7 317.5 L296.7 318.3 L290 320.8 L278.3 310 L268.3 302.5 L255 299.2 L241.7 298 L235 295 L228.3 280 L220 270 L215.8 263.3 L211.7 261.3 L205 262.5 L196.7 265 L188.3 269.2 L175 269.2 L160 267.5 L153.3 258.3 L148.3 245 L143.3 235 L135 225 L129.2 217.5 L125 215.3 L120 216.7 L115 223 L106.7 224.2 L100 220 L91.7 215 L83.3 208.3 L75 204.2 L68.3 203 L58.3 191.7 L48.3 178.3 L43.3 170.8 L36.7 168.7 L28.3 168.3 L16.7 171.3 L5.8 171.7 L4.3 171.8 Z" fill="#c4c8be" fill-opacity="0.47"/>
<path d="M4.3 63.2 L4.5 63 L8.3 64.2 L13.3 63 L16.7 64.2 L23.3 70 L30 75.8 L38.3 80.8 L47.5 85.5 L55 83.3 L66.7 80.3 L73.3 79.2 L81.7 78.3 L90 85 L95.8 90.8 L100 99.2 L106.7 108.3 L111.7 118.3 L116.7 128.3 L120 140.8 L125 150 L128.3 156.7 L141.7 157.2 L145.8 158.3 L150 155 L155 152 L160 155.8 L166.7 165 L171.7 170.8 L180 176.7 L188.3 183.3 L193.3 190 L198.3 195 L208.3 208.3 L213.3 210.5 L226.7 209.2 L233.3 202.5 L241.7 200.5 L250 203.3 L258.3 205.8 L268.3 209.2 L275 216.7 L281.7 223.3 L291.7 230 L298.3 238.3 L311.7 240.8 L330 242 L340 245 L346.7 251.7 L352.5 260 L358.3 262 L370 264.2 L374.2 263.3 L378.3 256.7 L383.3 248.3 L390 244.2 L400 243 L413.3 244.7 L416.7 242.5 L420 238 L425 240.8 L431.7 249.2 L436.7 261.7 L443.3 273.3 L450 288.3 L453.3 301.7 L456.7 311.7 L461.7 323.3 L470 329.2 L475.8 331.7 L480 341.7 L485 355 L485.8 356.7 L490.8 365 L496.7 371.7 L503.3 375.8 L511.7 377.5 L518.3 381.7 L523.3 387.5 L528.3 394.2 L533.3 397.5 L540 399.5 L545 398.3 L551.7 392.5 L555 380.8 L558.3 371.7 L563.3 368 L570 369.2 L574.2 373.3 L577.5 379.2 L582.5 380 L586.7 383.3 L595 393.3 L603.3 401.7 L610 413.3 L615 424.2 L624.2 455 L626.7 465 L630 473.3 L636.7 480 L641.7 481.7 L648.3 478.3 L655 473.3 L660 465 L665 448.3 L670 431.7 L676.7 418.3 L686.7 409.2 L695 404.2 L703.3 399.7 L710 398.3 L716.7 400.8 L723.3 404.2 L728.3 406.7 L733.3 403.3 L740 400 L747.5 396.3 L753.3 399.2 L763.3 396.7 L770 396.7 L776.7 400 L783.3 400.8 L790 398.3 L794.2 390 L797.5 376.7 L801.7 363.3 L806.7 351.7 L811.7 342.5 L815.8 337.5 L820 335.5 L836.7 335.3 L848.3 335.8 L858.3 338 L868.3 341.2 L876.7 337.5 L883.3 332.5 L886.7 331.7 L891.7 335 L898.3 343.3 L903.3 348.3 L908.3 350.3 L916.7 349.7 L921.7 353.3 L928.3 361.7 L933.3 371.7 L938.3 381.7 L943.3 396.7 L950 416.7 L953.3 431.7 L956.7 445 L961.7 463.3 L966.7 475.8 L973.3 478.3 L983.3 485.8 L988.3 483.3 L991.7 471.7 L995 458.3 L1001.7 446.7 L1008.3 435 L1015 431.7 L1030 430.8 L1040 432.5 L1051.7 432.5 L1060 429.2 L1070 425.8 L1076.7 422.5 L1083.3 424.2 L1090 426.7 L1097.5 431.7 L1103.3 429.2 L1110 426.7 L1122 426.7" stroke="#8f8f2c" stroke-width="1.25" fill="none" stroke-linejoin="round"/>
<path d="M4.3 171.8 L5.8 171.7 L16.7 171.3 L28.3 168.3 L36.7 168.7 L43.3 170.8 L48.3 178.3 L58.3 191.7 L68.3 203 L75 204.2 L83.3 208.3 L91.7 215 L100 220 L106.7 224.2 L115 223 L120 216.7 L125 215.3 L129.2 217.5 L135 225 L143.3 235 L148.3 245 L153.3 258.3 L160 267.5 L175 269.2 L188.3 269.2 L196.7 265 L205 262.5 L211.7 261.3 L215.8 263.3 L220 270 L228.3 280 L235 295 L241.7 298 L255 299.2 L268.3 302.5 L278.3 310 L290 320.8 L296.7 318.3 L311.7 317.5 L321.7 314.2 L331.7 315 L341.7 315.8 L353.3 308.3 L360 308.3 L365 303.3 L370 299.2 L372.5 300 L376.7 308.3 L381.7 323.3 L386.7 338.3 L393.3 351.7 L403.3 368.3 L411.7 388.3 L418.3 415 L425 433.3 L431.7 444.2 L440 448.3 L450 453.3 L453.3 448.3 L460 452.5 L465 461.7 L470 471.7 L475 479.2 L481.7 475 L488.3 470.8 L495 470 L503.3 466.7 L511.7 468.3 L518.3 471.7 L523.3 470.8 L528.3 467.5 L536.7 465.8 L543.3 465 L548.3 476.7 L555 498.3 L559.2 516.7 L565 531.7 L571.7 541.7 L578.3 548.3 L583.3 558.3 L588.3 562.5 L596.7 565 L606.7 568.3 L615.8 572.2 L620.8 565 L625 557.5 L628.3 551.7 L635 550.3 L640 543.3 L643.3 539.7 L655 539.2 L660 545 L665 551.7 L670 556.7 L676.7 560.3 L681.7 560.3 L688.3 557.5 L695 551.7 L700 541.7 L705 533.3 L710 526.7 L715 515 L720 505 L726.7 491.7 L730.8 488.3 L736.7 475 L741.7 468.7 L756.7 467 L768.3 466.3 L773.3 460.8 L778.3 455 L783.3 452.5 L790.8 451.7 L795 456.7 L799.2 463.3 L808.3 465.8 L818.3 465.8 L830 465.8 L838.3 462.5 L846.7 453.3 L855 445.8 L860 440.8 L866.7 435 L871.7 434.2 L876.7 439.2 L881.7 456.7 L885 470 L890 478.3 L898.3 491.7 L903.3 506.7 L910 530 L915 543.3 L926.7 558.3 L940 564.2 L950 558.3 L960 541.7 L966.7 530.8 L983.3 526.7 L988.3 528.3 L993.3 538.3 L1001.7 543.3 L1009.2 548.3 L1018.3 543.3 L1026.7 538.3 L1035 531.7 L1046.7 526.7 L1056.7 522.5 L1063.3 518.3 L1071.7 512.5 L1080 511.2 L1090 511.7 L1096.7 515 L1103.3 520 L1108.3 525 L1113.3 530.8 L1116.7 534.2 L1122 533" stroke="#8f8f2c" stroke-width="1.25" fill="none" stroke-linejoin="round"/>
<g fill="#ff0000"><circle cx="15.5" cy="116.7" r="2.4"/><circle cx="28.3" cy="121.7" r="2.4"/><circle cx="40.5" cy="123.8" r="2.4"/><circle cx="53" cy="132.5" r="2.4"/><circle cx="65.7" cy="137.7" r="2.4"/><circle cx="78.2" cy="140.2" r="2.4"/><circle cx="89.3" cy="149.2" r="2.4"/><circle cx="100.5" cy="160" r="2.4"/><circle cx="111.8" cy="171.3" r="2.4"/><circle cx="123" cy="180" r="2.4"/><circle cx="134.3" cy="190.2" r="2.4"/><circle cx="146.7" cy="198.8" r="2.4"/><circle cx="159.2" cy="210" r="2.4"/><circle cx="171.7" cy="217.7" r="2.4"/><circle cx="184.2" cy="225.2" r="2.4"/><circle cx="196.7" cy="227.5" r="2.4"/><circle cx="209.3" cy="235.2" r="2.4"/><circle cx="221.8" cy="240.2" r="2.4"/><circle cx="234.3" cy="246.5" r="2.4"/><circle cx="246.8" cy="250.2" r="2.4"/><circle cx="259.3" cy="253.8" r="2.4"/><circle cx="271.8" cy="257.5" r="2.4"/><circle cx="283" cy="269" r="2.4"/><circle cx="295.5" cy="276.3" r="2.4"/><circle cx="308.2" cy="278.8" r="2.4"/><circle cx="320.7" cy="276.3" r="2.4"/><circle cx="333" cy="277.7" r="2.4"/><circle cx="345.5" cy="281.2" r="2.4"/><circle cx="358" cy="283.7" r="2.4"/><circle cx="370.5" cy="281.3" r="2.4"/><circle cx="383" cy="288.7" r="2.4"/><circle cx="395.5" cy="297.5" r="2.4"/><circle cx="406.7" cy="310.2" r="2.4"/><circle cx="416.7" cy="322.5" r="2.4"/><circle cx="424.3" cy="335" r="2.4"/><circle cx="433" cy="347.7" r="2.4"/><circle cx="443" cy="360" r="2.4"/><circle cx="451.8" cy="372.5" r="2.4"/><circle cx="459.5" cy="385.2" r="2.4"/><circle cx="470.5" cy="397.8" r="2.4"/><circle cx="480.5" cy="410" r="2.4"/><circle cx="493" cy="418.8" r="2.4"/><circle cx="505.5" cy="421.7" r="2.4"/><circle cx="518" cy="425.3" r="2.4"/><circle cx="530.7" cy="431.3" r="2.4"/><circle cx="543" cy="432.5" r="2.4"/><circle cx="554.2" cy="440.2" r="2.4"/><circle cx="566.8" cy="450.2" r="2.4"/><circle cx="578" cy="461.3" r="2.4"/><circle cx="589.3" cy="472.5" r="2.4"/><circle cx="601.7" cy="482.5" r="2.4"/><circle cx="613" cy="493.8" r="2.4"/><circle cx="623" cy="505" r="2.4"/><circle cx="634.2" cy="513.8" r="2.4"/><circle cx="646.7" cy="508.7" r="2.4"/><circle cx="659.2" cy="505" r="2.4"/><circle cx="669.2" cy="493.8" r="2.4"/><circle cx="681.7" cy="485" r="2.4"/><circle cx="694.2" cy="477.5" r="2.4"/><circle cx="704.2" cy="466.3" r="2.4"/><circle cx="716.7" cy="455.2" r="2.4"/><circle cx="729.2" cy="445" r="2.4"/><circle cx="741.7" cy="433.7" r="2.4"/><circle cx="754.2" cy="431.2" r="2.4"/><circle cx="766.7" cy="431.2" r="2.4"/><circle cx="779.2" cy="426.2" r="2.4"/><circle cx="791.7" cy="423.7" r="2.4"/><circle cx="801.7" cy="412.5" r="2.4"/><circle cx="813" cy="402.5" r="2.4"/><circle cx="825.5" cy="398.7" r="2.4"/><circle cx="838" cy="397.5" r="2.4"/><circle cx="850.5" cy="391.3" r="2.4"/><circle cx="863" cy="387.5" r="2.4"/><circle cx="875.5" cy="387.5" r="2.4"/><circle cx="884.2" cy="398.7" r="2.4"/><circle cx="893" cy="411.3" r="2.4"/><circle cx="900.5" cy="423.8" r="2.4"/><circle cx="909.2" cy="436.3" r="2.4"/><circle cx="919.3" cy="446.3" r="2.4"/><circle cx="929.2" cy="458.8" r="2.4"/><circle cx="938" cy="471.2" r="2.4"/><circle cx="946.7" cy="483.7" r="2.4"/><circle cx="956.7" cy="496.3" r="2.4"/><circle cx="969.2" cy="503.7" r="2.4"/><circle cx="981.7" cy="506.3" r="2.4"/><circle cx="992.8" cy="500" r="2.4"/><circle cx="1005.5" cy="492.5" r="2.4"/><circle cx="1018" cy="486.3" r="2.4"/><circle cx="1030.5" cy="481.3" r="2.4"/><circle cx="1043" cy="478.7" r="2.4"/><circle cx="1055.5" cy="476.3" r="2.4"/><circle cx="1068" cy="471.3" r="2.4"/><circle cx="1080.5" cy="467.7" r="2.4"/><circle cx="1093" cy="470" r="2.4"/><circle cx="1105.5" cy="475" r="2.4"/><circle cx="1118" cy="480" r="2.4"/></g>
<rect x="556.7" y="519.4" width="672" height="16.4" fill="#969bf5" fill-opacity="0.25" stroke="#1c1c1c" stroke-width="1.3"/>
</g>
<rect x="6" y="16" width="884" height="18" fill="#ffffff" fill-opacity="0.75"/>
<text x="10.5" y="30" font-size="14" fill="#16166e" stroke="#16166e" stroke-width="0.2" textLength="247" lengthAdjust="spacingAndGlyphs">Platinum USD/OZ [XPTUSD GTM Täglich]</text>
<text x="263" y="30" font-size="14" fill="#0a0a14" stroke="#0a0a14" stroke-width="0.2" textLength="312.4" lengthAdjust="spacingAndGlyphs">15.02.2019 - O:788,0975 H:808,6075 L:784,2450</text>
<text x="580" y="30" font-size="14" fill="#18be18" stroke="#18be18" stroke-width="0.2" textLength="210.7" lengthAdjust="spacingAndGlyphs">C:807,7925 +19,6950 +2,4991%</text>
<text x="795" y="31.6" font-size="20" fill="#ff8a1c">•</text>
<text x="807" y="30" font-size="14" fill="#ff8a1c" stroke="#ff8a1c" stroke-width="0.2" textLength="76" lengthAdjust="spacingAndGlyphs">15 min delay</text>
<rect x="0" y="0" width="1323" height="9" fill="#5b6676"/>
<rect x="0" y="8" width="1323" height="1" fill="#515d6b"/>
<rect x="1236" y="9" width="87" height="1" fill="#e6e6ec"/>
<rect x="0" y="9" width="2" height="291" fill="#dcdcde"/><rect x="0" y="300" width="2" height="540" fill="#c6c6c7"/>
<rect x="0" y="0" width="1.7" height="9" fill="#868e98"/>
<rect x="1.9" y="9" width="1.3" height="631" fill="#a9a9aa"/>
<rect x="1234" y="9" width="2" height="631" fill="#bcbcc2"/>
<rect x="2" y="639" width="1234" height="2" fill="#858b8c"/>
<path d="M2.5 641.5 H1234.7 V815.5 H2.5 Z" fill="none" stroke="#b26462" stroke-width="1.05"/>
<g clip-path="url(#cb)">
<path d="M3 684.7 H1121 M3 773.5 H1121" stroke="#787878" stroke-width="1" stroke-dasharray="1 1.4" fill="none"/>
<path d="M5.1 677.4 L9.1 673.3 L13.8 673.3 L16.2 680.4 L19.2 697.6 L22.3 716.9 L25.9 696.6 L30 699.7 L34.4 692.6 L36 705.7 L38.5 738.1 L43.5 739.1 L47 773.5 L51.6 777.6 L56.3 789.7 L59.3 771.5 L64.4 795.8 L69.8 784.7 L72.9 760.4 L77.9 761.4 L81 757.3 L85 764.4 L89.1 774.6 L91.1 784.7 L96.2 784.7 L98.6 763.4 L103.2 785.7 L107.3 728 L110.9 767.5 L116.4 767.5 L119.4 750.3 L123.5 768.5 L126.5 782.7 L129.6 786.7 L137.7 786.7 L140.7 777.6 L145.7 776.6 L149.8 787.7 L154.9 788.7 L158.9 778.6 L161.9 737.1 L167 743.2 L171.1 738.1 L176.1 746.2 L179.1 721.9 L185.2 707.8 L188.3 678.4 L193.3 687.5 L197.4 713.8 L200.4 740.1 L206.1 759.4 L209.5 728 L212.6 758.4 L215.6 784.7 L218.6 792.8 L222.3 773.5 L227.7 796.8 L236.4 796.8 L239.9 776.6 L243.9 757.3 L248.6 755.3 L252 734.1 L257.1 728 L258 727 L261.1 685.5 L266.1 687.5 L269.2 711.8 L271.2 742.2 L274.2 772.5 L278.9 802.9 L282.3 782.7 L287.4 784.7 L291 738.1 L294.5 719.9 L299.1 730 L303.6 711.8 L308 736.1 L312.7 728 L317.8 723.9 L320.8 709.8 L324.8 686.5 L328.9 697.6 L332.9 707.8 L339 708.8 L342.4 693.6 L345.1 723.9 L347.5 754.3 L350.1 713.8 L354.2 721.9 L357.2 740.1 L359.9 761.4 L364.3 732 L368.8 725 L370.4 750.3 L372.4 789.7 L376.5 793.8 L384.6 775.6 L389.6 792.8 L393.7 751.3 L398.7 774.6 L401.8 774.6 L405.8 789.7 L410.9 794.8 L414.5 781.6 L420 788.7 L423.4 744.2 L428.1 734.1 L433.1 726 L441.2 708.8 L445.3 714.8 L449.7 748.2 L453.4 714.8 L457.4 737.1 L461.5 739.1 L465.5 755.3 L470.6 753.3 L474.6 771.5 L479.3 727 L483.7 716.9 L487.8 713.8 L492.2 687.5 L495.9 728 L501 699.7 L505 703.7 L508.4 676.4 L511 705.7 L513.6 734.1 L518.1 714.8 L522.1 698.6 L526.2 718.9 L530.2 712.8 L534.3 717.9 L538.3 712.8 L542.4 726 L545.4 750.3 L547.4 782.7 L552.5 785.1 L556.2 782.7 L560.6 764.4 L564.7 744.2 L568.7 733.1 L572.8 732.4 L577.8 737.1 L581.9 763.4 L585.9 742.2 L589.6 719.9 L595 739.1 L598.7 720.9 L603.1 710.8 L608.2 714.8 L612.2 713.8 L615.9 761.4 L620.3 740.1 L624.4 719.9 L628.4 750.3 L632.5 740.1 L637.5 715.9 L642 692.6 L646 687.5 L649.7 707.8 L654.7 693.6 L658.2 671.3 L662.8 664.2 L667.5 657.6 L670.9 678.4 L675 681.4 L679.6 693.6 L684.5 693.6 L688.1 730 L692.2 719.9 L696.2 707.8 L700.7 683.5 L705.3 696.6 L709.4 700.7 L714.5 726 L718.5 745.2 L722.6 722.9 L727 726 L730.6 670.3 L734.7 677.4 L740.8 683.5 L745.8 688.5 L748.5 711.8 L751.9 736.1 L757 726 L761 755.3 L765.5 720.9 L770.1 730 L774.5 741.2 L778.2 731 L782.2 731 L786.9 720.9 L791.3 716.9 L795.4 662.2 L799.8 665.2 L803.5 683.5 L807.9 673.3 L812 668.3 L815.6 681.4 L819.3 701.7 L822.7 728 L825.7 753.3 L829.8 761.4 L833.4 776.6 L837.9 762.4 L842.9 742.2 L847 726 L850.6 756.3 L855.1 750.3 L859.5 741.2 L863.6 761.4 L867.8 747.2 L872.3 774.6 L876.9 770.5 L880.4 782.7 L884.4 799.9 L888.9 780.6 L892.9 788.7 L897.6 779.6 L902.2 790.7 L906.7 783.7 L911.2 789.7 L914.8 787.7 L919.9 752.3 L923.9 762.4 L928.6 778.6 L932 759.4 L937.1 758.4 L941.1 772.5 L944.8 727 L949.2 755.3 L958.3 755.3 L961.8 709.8 L966.4 717.9 L970.5 740.1 L974.5 732 L979.6 714.8 L984.6 707.8 L988.7 687.5 L992.1 661.2 L996.2 684.5 L1000.8 689.5 L1004.9 675.4 L1008.9 684.5 L1013 711.8 L1017 744.2 L1022.4 753.3 L1026.1 730 L1031.1 721.9 L1034.2 750.3 L1038.2 774.6 L1043.3 788.7 L1047.3 776.6 L1051.4 750.3 L1053.4 715.9 L1056 693.6 L1061.1 714.8 L1065.5 691.6 L1069.2 675.4 L1073.2 670.3 L1076.7 679.4 L1080.7 691.6 L1086.4 701.7 L1089.8 734.1 L1094.5 766.1 L1099.4 766.5 L1103 793.8 L1107 779.6 L1112.1 794.8 L1116.2 779.6 L1118.8 750.3 L1120.6 726" stroke="#008484" stroke-width="2.4" fill="none" stroke-linejoin="miter"/>
<path d="M4.5 742.2 L9.1 715.9 L14.2 693.6 L17.2 682.4 L22.3 686.5 L28.3 693.6 L33.4 699.7 L38.5 708.8 L43.5 713.8 L48.6 730 L53.6 746.2 L57.7 764.4 L62.8 774.6 L67.8 783.7 L72.9 779.6 L78.9 774.6 L83 771.5 L87 766.5 L91.1 767.5 L97.2 772.5 L103.2 777.6 L109.3 767.5 L116.4 763.4 L121.5 760.4 L125.5 760.4 L129.6 771.5 L135.6 775.6 L141.7 784.7 L147.8 782.7 L155.9 784.7 L161.9 774.6 L168 764.4 L176.1 746.2 L185.2 730 L191.3 709.8 L196.4 699.7 L202.4 707.8 L210.5 726 L218.6 758.4 L225.7 770.5 L230.8 786.7 L235.8 790.7 L242.9 782.7 L249 774.6 L256.1 754.3 L262.1 730 L269.2 713.8 L274.2 721.9 L279.3 738.1 L284.4 762.4 L288.4 775.6 L291.4 775.6 L297.5 758.4 L303.6 738.1 L308.6 727 L313.7 726 L317.8 726 L325.9 715.9 L333.9 705.7 L342 699.7 L348.1 713.8 L356.2 720.9 L364.3 738.1 L368.4 732 L375.4 759.4 L381.5 766.5 L389.6 784.7 L396.7 777.6 L401.8 774.6 L405.8 777.6 L410.9 777.6 L415.9 784.7 L420 785.7 L427.1 772.5 L433.1 752.3 L440.2 730 L445.3 720.9 L450.3 723.9 L454.4 720.9 L460.5 727 L466.5 738.1 L471.6 741.2 L475.6 751.3 L481.7 748.2 L488.8 734.1 L495.9 713.8 L502 707.8 L508.4 699.7 L514 707.8 L522.1 706.7 L530.2 714.8 L538.3 711.8 L544.4 721.9 L550.5 742.2 L558.6 766.5 L564.7 771.5 L570.7 756.3 L577.8 742.2 L583.9 743.2 L590 739.1 L595 740.1 L603.1 726 L611.2 719.9 L618.3 728 L625.4 731 L632.5 741.2 L641.6 723.9 L651.7 705.7 L659.8 690.5 L666.9 681.4 L671.9 672.3 L676 670.3 L681.1 676.4 L685.1 683.5 L689.1 697.6 L696.2 707.8 L701.3 704.7 L706.4 706.7 L710.4 701.7 L714.5 702.7 L720.5 714.8 L727 723.9 L732.7 712.8 L738.7 697.6 L744.8 688.5 L748.9 687.5 L752.9 699.7 L758 709.8 L762 723.9 L771.1 734.1 L776.1 735.1 L783.2 731 L789.3 729 L794.4 719.9 L801.4 693.6 L807.5 681.4 L812.6 671.3 L818.6 680.4 L825.7 699.7 L829.8 717.9 L833.8 739.1 L838.9 754.3 L841.9 759.4 L848 754.3 L853.1 752.3 L859.1 743.2 L864.2 747.2 L870.3 751.3 L877.3 759.4 L883.4 772.5 L890.5 782.7 L896.6 786.7 L902.7 787.7 L908.7 786.7 L914.8 786.7 L920.9 777.6 L924.9 774.6 L928 774.6 L935 766.5 L941.1 762.4 L948.2 756.3 L953.3 754.3 L958.3 754.3 L963.4 741.2 L969.5 737.1 L974.5 732 L979.6 722.9 L983.6 722.9 L988.7 716.9 L993.7 697.6 L999.8 688.5 L1004.9 679.4 L1009.9 679.8 L1015 694.6 L1020 709.8 L1026.1 726 L1034.2 742.2 L1042.3 756.3 L1049.4 768.5 L1052.4 768.5 L1056.4 758.4 L1061.5 746.2 L1067.6 719.9 L1073.6 689.5 L1078.7 686.5 L1083.8 683.1 L1088.8 690.5 L1092.9 707.8 L1097.9 732 L1103 752.3 L1109.1 770.5 L1115.1 782.7 L1120.2 777.6" stroke="#96169a" stroke-width="1" fill="none"/>
<mask id="lm" maskUnits="userSpaceOnUse" x="10" y="764" width="56" height="45"><rect x="10" y="764" width="56" height="45" fill="#fff"/><text x="17.6" y="799.9" font-size="30.4" font-weight="bold" fill="#000" stroke="#000" stroke-width="1.2" textLength="42.8" lengthAdjust="spacingAndGlyphs">on</text></mask>
<clipPath id="lc"><rect x="60" y="783.4" width="80" height="17.2"/></clipPath>
<g fill="#10140c" stroke="#10140c" stroke-width="0" opacity="0.31"><rect x="12.2" y="766.5" width="50.6" height="39.5" rx="7.5" ry="7.5" mask="url(#lm)"/>
<g clip-path="url(#lc)"><text x="66.2" y="799.7" font-size="22.6" font-weight="bold" textLength="14" lengthAdjust="spacingAndGlyphs" stroke-width="1.6">L</text>
<text x="82" y="800.5" font-size="32.8" font-weight="bold" textLength="50.5" lengthAdjust="spacingAndGlyphs">ine</text></g></g>
<text x="66.5" y="779" font-size="9.5" font-weight="bold" fill="#10140c" fill-opacity="0.2" textLength="65.5" lengthAdjust="spacingAndGlyphs">tradesignal</text>
<circle cx="1121.2" cy="779.2" r="21.6" fill="#969bf5" fill-opacity="0.3" stroke="#101010" stroke-width="1.4"/>
</g>
<path d="M1236 633.8 h3.3 M1236 622.3 h6 M1236 610.8 h3.3 M1236 599.5 h3.3 M1236 588.2 h3.3 M1236 576.9 h6 M1236 565.8 h3.3 M1236 554.7 h3.3 M1236 543.7 h3.3 M1236 532.7 h6 M1236 521.9 h3.3 M1236 511.1 h3.3 M1236 500.3 h3.3 M1236 489.7 h6 M1236 479.1 h3.3 M1236 468.6 h3.3 M1236 458.1 h3.3 M1236 447.7 h6 M1236 437.3 h3.3 M1236 427.1 h3.3 M1236 416.8 h3.3 M1236 406.7 h6 M1236 396.6 h3.3 M1236 386.6 h3.3 M1236 376.6 h3.3 M1236 366.7 h6 M1236 356.8 h3.3 M1236 347 h3.3 M1236 337.3 h3.3 M1236 327.6 h6 M1236 317.9 h3.3 M1236 308.3 h3.3 M1236 298.8 h3.3 M1236 289.3 h6 M1236 279.9 h3.3 M1236 270.5 h3.3 M1236 261.2 h3.3 M1236 251.9 h6 M1236 242.7 h3.3 M1236 233.6 h3.3 M1236 224.4 h3.3 M1236 215.4 h6 M1236 206.3 h3.3 M1236 197.4 h3.3 M1236 188.4 h3.3 M1236 179.6 h6 M1236 170.7 h3.3 M1236 161.9 h3.3 M1236 153.2 h3.3 M1236 144.5 h6 M1236 135.8 h3.3 M1236 127.2 h3.3 M1236 118.6 h3.3 M1236 110.1 h6 M1236 101.6 h3.3 M1236 93.2 h3.3 M1236 84.8 h3.3 M1236 76.4 h6 M1236 68.1 h3.3 M1236 59.8 h3.3 M1236 51.6 h3.3 M1236 43.4 h6 M1236 35.2 h3.3" stroke="#16166e" stroke-width="1.4" fill="none"/>
<text x="1246.8" y="627.1" font-size="14" fill="#16166e" stroke="#16166e" stroke-width="0.25" textLength="58.4" lengthAdjust="spacingAndGlyphs">740,0000</text>
<text x="1246.8" y="581.7" font-size="14" fill="#16166e" stroke="#16166e" stroke-width="0.25" textLength="58.4" lengthAdjust="spacingAndGlyphs">760,0000</text>
<text x="1246.8" y="537.5" font-size="14" fill="#16166e" stroke="#16166e" stroke-width="0.25" textLength="58.4" lengthAdjust="spacingAndGlyphs">780,0000</text>
<text x="1246.8" y="494.5" font-size="14" fill="#16166e" stroke="#16166e" stroke-width="0.25" textLength="58.4" lengthAdjust="spacingAndGlyphs">800,0000</text>
<text x="1246.8" y="452.5" font-size="14" fill="#16166e" stroke="#16166e" stroke-width="0.25" textLength="58.4" lengthAdjust="spacingAndGlyphs">820,0000</text>
<text x="1246.8" y="411.5" font-size="14" fill="#16166e" stroke="#16166e" stroke-width="0.25" textLength="58.4" lengthAdjust="spacingAndGlyphs">840,0000</text>
<text x="1246.8" y="371.5" font-size="14" fill="#16166e" stroke="#16166e" stroke-width="0.25" textLength="58.4" lengthAdjust="spacingAndGlyphs">860,0000</text>
<text x="1246.8" y="332.4" font-size="14" fill="#16166e" stroke="#16166e" stroke-width="0.25" textLength="58.4" lengthAdjust="spacingAndGlyphs">880,0000</text>
<text x="1246.8" y="294.1" font-size="14" fill="#16166e" stroke="#16166e" stroke-width="0.25" textLength="58.4" lengthAdjust="spacingAndGlyphs">900,0000</text>
<text x="1246.8" y="256.7" font-size="14" fill="#16166e" stroke="#16166e" stroke-width="0.25" textLength="58.4" lengthAdjust="spacingAndGlyphs">920,0000</text>
<text x="1246.8" y="220.2" font-size="14" fill="#16166e" stroke="#16166e" stroke-width="0.25" textLength="58.4" lengthAdjust="spacingAndGlyphs">940,0000</text>
<text x="1246.8" y="184.4" font-size="14" fill="#16166e" stroke="#16166e" stroke-width="0.25" textLength="58.4" lengthAdjust="spacingAndGlyphs">960,0000</text>
<text x="1246.8" y="149.3" font-size="14" fill="#16166e" stroke="#16166e" stroke-width="0.25" textLength="58.4" lengthAdjust="spacingAndGlyphs">980,0000</text>
<text x="1246.8" y="114.9" font-size="14" fill="#16166e" stroke="#16166e" stroke-width="0.25" textLength="67" lengthAdjust="spacingAndGlyphs">1000,0000</text>
<text x="1246.8" y="81.2" font-size="14" fill="#16166e" stroke="#16166e" stroke-width="0.25" textLength="67" lengthAdjust="spacingAndGlyphs">1020,0000</text>
<text x="1246.8" y="48.2" font-size="14" fill="#16166e" stroke="#16166e" stroke-width="0.25" textLength="67" lengthAdjust="spacingAndGlyphs">1040,0000</text>
<text x="1236.5" y="24" font-size="14" fill="#16166e" textLength="27" lengthAdjust="spacingAndGlyphs">USD</text>
<text x="1311.3" y="18.3" font-size="10.3" font-weight="bold" fill="#16166e" textLength="9.5" lengthAdjust="spacingAndGlyphs">ln</text>
<path d="M1236 473.4 L1245 463.4 H1322.3 V483.4 H1245 Z" fill="url(#tg)" stroke="#16166e" stroke-width="1.4" stroke-linejoin="miter"/>
<text x="1247" y="478.2" font-size="14" fill="#0a0a0a" stroke="#0a0a0a" stroke-width="0.25" textLength="59.6" lengthAdjust="spacingAndGlyphs">807,7925</text>
<path d="M1236 804 h6 M1236 789.1 h3.3 M1236 774.3 h3.3 M1236 759.4 h3.3 M1236 744.6 h3.3 M1236 729.7 h3.3 M1236 714.8 h3.3 M1236 700 h3.3 M1236 685.1 h3.3 M1236 670.3 h3.3 M1236 655.4 h6" stroke="#16166e" stroke-width="1.4" fill="none"/>
<text x="1246.8" y="660.6" font-size="14" fill="#16166e" textLength="58.4" lengthAdjust="spacingAndGlyphs">100,0000</text>
<rect x="1236" y="642" width="87" height="15.2" fill="#dddde3"/>
<text x="1236.8" y="655" font-size="14" fill="#16166e" textLength="26" lengthAdjust="spacingAndGlyphs">PCR</text>
<text x="1246.8" y="808.8" font-size="14" fill="#16166e" textLength="43.6" lengthAdjust="spacingAndGlyphs">0,0000</text>
<path d="M1236 685.8 L1245 675.8 H1322.3 V695.8 H1245 Z" fill="url(#tg)" stroke="#7c7c7c" stroke-width="1.4" stroke-linejoin="miter"/>
<text x="1247" y="690.6" font-size="14" fill="#0a0a0a" stroke="#0a0a0a" stroke-width="0.25" textLength="51.5" lengthAdjust="spacingAndGlyphs">80,0000</text>
<path d="M1236 725.9 L1245 716.1 H1322.3 V735.7 H1245 Z" fill="url(#tg)" stroke="#1a8c8c" stroke-width="1.4" stroke-linejoin="miter"/>
<text x="1247" y="730.7" font-size="14" fill="#0a0a0a" stroke="#0a0a0a" stroke-width="0.25" textLength="51.5" lengthAdjust="spacingAndGlyphs">52,6301</text>
<path d="M1236 774.4 L1245 764.4 H1322.3 V784.4 H1245 Z" fill="url(#tg)" stroke="#7c7c7c" stroke-width="1.4" stroke-linejoin="miter"/>
<text x="1247" y="779.2" font-size="14" fill="#0a0a0a" stroke="#0a0a0a" stroke-width="0.25" textLength="51.5" lengthAdjust="spacingAndGlyphs">20,0000</text>
<text x="47.1" y="836" font-size="14" fill="#16166e" stroke="#16166e" stroke-width="0.2" textLength="21" lengthAdjust="spacingAndGlyphs">Mrz</text>
<text x="142.1" y="836" font-size="14" fill="#16166e" stroke="#16166e" stroke-width="0.2" textLength="21.3" lengthAdjust="spacingAndGlyphs">Apr</text>
<text x="231.1" y="836" font-size="14" fill="#16166e" stroke="#16166e" stroke-width="0.2" textLength="19.3" lengthAdjust="spacingAndGlyphs">Mai</text>
<text x="329.8" y="836" font-size="14" fill="#16166e" stroke="#16166e" stroke-width="0.2" textLength="21.7" lengthAdjust="spacingAndGlyphs">Jun</text>
<text x="419.8" y="836" font-size="14" fill="#16166e" stroke="#16166e" stroke-width="0.2" textLength="16" lengthAdjust="spacingAndGlyphs">Jul</text>
<text x="513.5" y="836" font-size="14" fill="#16166e" stroke="#16166e" stroke-width="0.2" textLength="24" lengthAdjust="spacingAndGlyphs">Aug</text>
<text x="612.1" y="836" font-size="14" fill="#16166e" stroke="#16166e" stroke-width="0.2" textLength="23.3" lengthAdjust="spacingAndGlyphs">Sep</text>
<text x="697.1" y="836" font-size="14" fill="#16166e" stroke="#16166e" stroke-width="0.2" textLength="22" lengthAdjust="spacingAndGlyphs">Okt</text>
<text x="796.1" y="836" font-size="14" fill="#16166e" stroke="#16166e" stroke-width="0.2" textLength="24" lengthAdjust="spacingAndGlyphs">Nov</text>
<text x="889.8" y="836" font-size="14" fill="#16166e" stroke="#16166e" stroke-width="0.2" textLength="23" lengthAdjust="spacingAndGlyphs">Dez</text>
<text x="979.8" y="836" font-size="14" fill="#16166e" stroke="#16166e" stroke-width="0.2" textLength="31.3" lengthAdjust="spacingAndGlyphs">2019</text>
<text x="1078.5" y="836" font-size="14" fill="#16166e" stroke="#16166e" stroke-width="0.2" textLength="22.3" lengthAdjust="spacingAndGlyphs">Feb</text>
<text x="1180.8" y="836" font-size="14" fill="#16166e" stroke="#16166e" stroke-width="0.2" textLength="21" lengthAdjust="spacingAndGlyphs">Mrz</text>
<path d="M47.3 817 V822.6 M142.3 817 V822.6 M231.3 817 V822.6 M330 817 V822.6 M420 817 V822.6 M513.7 817 V822.6 M612.3 817 V822.6 M697.3 817 V822.6 M796.3 817 V822.6 M890 817 V822.6 M980 817 V822.6 M1078.7 817 V822.6 M1181 817 V822.6" stroke="#16166e" stroke-width="1.2" fill="none"/>
<rect x="1112" y="838.3" width="123" height="1.7" fill="#c4d6f2"/>
</svg></body></html>
